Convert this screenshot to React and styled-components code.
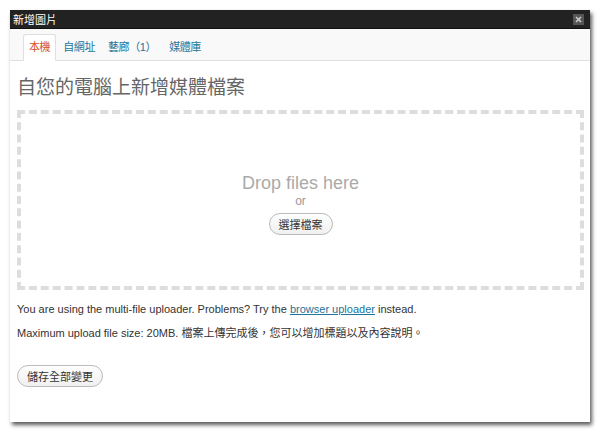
import React from 'react'
import styled, { createGlobalStyle } from 'styled-components'

const GlobalStyle = createGlobalStyle`
  html, body {
    margin: 0;
    padding: 0;
    background: #fff;
  }
  body {
    font-family: "Liberation Sans", "Noto Sans CJK TC", sans-serif;
    font-size: 11px;
    color: #333;
  }
`

const Dialog = styled.div`
  margin: 10px;
  width: 580px;
  height: 412px;
  background: #fff;
  box-shadow: 2px 3px 4px rgba(0, 0, 0, 0.65);
  display: flex;
  flex-direction: column;
`

const TitleBar = styled.div`
  height: 18px;
  background: #222;
  border-bottom: 1px solid #111;
  display: flex;
  align-items: center;
  justify-content: space-between;
  padding: 0 6px 0 3px;
  color: #fff;
  font-size: 11px;
`

const CloseButton = styled.span`
  width: 11px;
  height: 11px;
  background: #555;
  display: flex;
  align-items: center;
  justify-content: center;
`

const TabBar = styled.div`
  height: 31px;
  background: #f9f9f9;
  border-bottom: 1px solid #dfdfdf;
  display: flex;
  align-items: flex-end;
  padding-left: 13px;
`

const Tab = styled.a`
  height: 25px;
  line-height: 25px;
  padding: 0 5px;
  margin-right: 1px;
  margin-bottom: -1px;
  font-size: 11px;
  letter-spacing: -0.4px;
  color: ${p => (p.$active ? '#d54e21' : '#21759b')};
  background: ${p => (p.$active ? '#fff' : 'transparent')};
  border: 1px solid ${p => (p.$active ? '#dfdfdf' : 'transparent')};
  border-bottom: 1px solid ${p => (p.$active ? '#fff' : 'transparent')};
  border-radius: 3px 3px 0 0;
  text-decoration: none;
`

const Content = styled.div`
  padding: 0 6px 0 7px;
  display: flex;
  flex-direction: column;
`

const Heading = styled.h3`
  margin: 16px 0 11px;
  font-size: 19px;
  font-weight: normal;
  line-height: 22px;
  color: #666;
`

const DropZone = styled.div`
  height: 166px;
  border: 4px dashed #ddd;
  display: flex;
  flex-direction: column;
  align-items: center;
  justify-content: center;
  padding-top: 6px;
  box-sizing: content-box;
`

const DropText = styled.p`
  margin: 0;
  font-size: 18px;
  line-height: 22px;
  color: #aaa;
`

const OrText = styled.p`
  margin: 0 0 4px;
  font-size: 12px;
  line-height: 15px;
  color: #999;
`

const PillButton = styled.button`
  height: 22px;
  padding: 0 9px;
  border: 1px solid #bbb;
  border-radius: 11px;
  background: linear-gradient(#fefefe, #f0f0f0);
  font-family: inherit;
  font-size: 11px;
  color: #333;
  cursor: pointer;
`

const Note = styled.p`
  margin: ${p => p.$top}px 0 0;
  font-size: 11px;
  line-height: 13px;
  color: #333;

  a {
    color: #21759b;
  }
`

const SaveRow = styled.div`
  margin-top: 25px;
`

export default function App() {
  return (
    <>
      <GlobalStyle />
      <Dialog>
        <TitleBar>
          <span>新增圖片</span>
          <CloseButton>
            <svg width="7" height="7" viewBox="0 0 7 7">
              <path d="M1 1L6 6M6 1L1 6" stroke="#ccc" strokeWidth="1.6" />
            </svg>
          </CloseButton>
        </TitleBar>
        <TabBar>
          <Tab $active>本機</Tab>
          <Tab>自網址</Tab>
          <Tab>藝廊（1）</Tab>
          <Tab>媒體庫</Tab>
        </TabBar>
        <Content>
          <Heading>自您的電腦上新增媒體檔案</Heading>
          <DropZone>
            <DropText>Drop files here</DropText>
            <OrText>or</OrText>
            <PillButton>選擇檔案</PillButton>
          </DropZone>
          <Note $top={13}>
            You are using the multi-file uploader. Problems? Try the <a href="#">browser uploader</a> instead.
          </Note>
          <Note $top={11}>
            Maximum upload file size: 20MB. 檔案上傳完成後，您可以增加標題以及內容說明。
          </Note>
          <SaveRow>
            <PillButton>儲存全部變更</PillButton>
          </SaveRow>
        </Content>
      </Dialog>
    </>
  )
}
